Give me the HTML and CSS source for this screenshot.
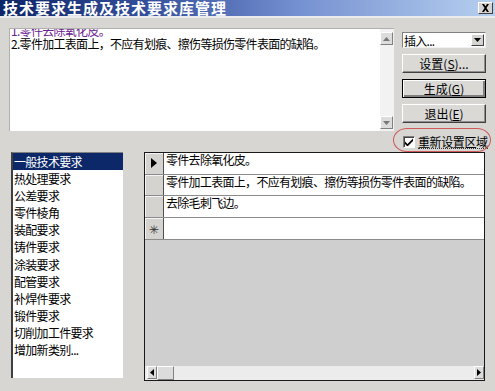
FILE: index.html
```html
<!DOCTYPE html>
<html lang="zh-CN">
<head>
    <meta charset="UTF-8">
    <title>技术要求生成及技术要求库管理</title>
    <link rel="stylesheet" href="styles.css">
</head>
<body>
    <div class="window">
        <div class="titlebar">
            <span class="title">技术要求生成及技术要求库管理</span>
            <span class="close-btn">
                <svg width="9" height="8" viewBox="0 0 9 8"><path d="M1 0h2l1.5 2.2L6 0h2L5.5 4 8 8H6L4.5 5.8 3 8H1l2.5-4z" fill="#000"/></svg>
            </span>
        </div>

        <div class="top">
            <div class="memo">
                <div class="memo-text">
                    <p class="old-line">1.零件去除氧化皮。</p>
                    <p>2.零件加工表面上，不应有划痕、擦伤等损伤零件表面的缺陷。</p>
                </div>
                <div class="vscroll">
                    <span class="sb-btn"><svg width="7" height="4" viewBox="0 0 7 4"><path d="M3.5 0L7 4H0z" fill="#777"/></svg></span>
                    <span class="sb-btn"><svg width="7" height="4" viewBox="0 0 7 4"><path d="M0 0h7L3.5 4z" fill="#777"/></svg></span>
                </div>
            </div>

            <div class="side">
                <div class="combo">
                    <span class="combo-text">插入...</span>
                    <span class="combo-btn"><svg width="7" height="4" viewBox="0 0 7 4"><path d="M0 0h7L3.5 4z" fill="#000"/></svg></span>
                </div>
                <div class="btn">设置(<u>S</u>)...</div>
                <div class="btn default">生成(<u>G</u>)</div>
                <div class="btn">退出(<u>E</u>)</div>
                <div class="check-row">
                    <span class="checkbox">
                        <svg width="8" height="8" viewBox="0 0 8 8"><path d="M0 3.5l2.5 2.5L8 0.5V3L2.5 8.5 0 6z" fill="#000"/></svg>
                    </span>
                    <span class="check-label">重新设置区域</span>
                </div>
            </div>
        </div>

        <div class="bottom">
            <ul class="list">
                <li class="active">一般技术要求</li>
                <li>热处理要求</li>
                <li>公差要求</li>
                <li>零件棱角</li>
                <li>装配要求</li>
                <li>铸件要求</li>
                <li>涂装要求</li>
                <li>配管要求</li>
                <li>补焊件要求</li>
                <li>锻件要求</li>
                <li>切削加工件要求</li>
                <li>增加新类别...</li>
            </ul>

            <div class="grid">
                <div class="row">
                    <div class="row-head"><svg width="6" height="10" viewBox="0 0 6 10"><path d="M0 0l6 5-6 5z" fill="#000"/></svg></div>
                    <div class="cell">零件去除氧化皮。</div>
                </div>
                <div class="row">
                    <div class="row-head"></div>
                    <div class="cell">零件加工表面上，不应有划痕、擦伤等损伤零件表面的缺陷。</div>
                </div>
                <div class="row">
                    <div class="row-head"></div>
                    <div class="cell">去除毛刺飞边。</div>
                </div>
                <div class="row">
                    <div class="row-head new-row">✳</div>
                    <div class="cell"></div>
                </div>
                <div class="grid-empty"></div>
                <div class="hscroll">
                    <span class="sb-btn small"><svg width="4" height="7" viewBox="0 0 4 7"><path d="M4 0v7L0 3.5z" fill="#000"/></svg></span>
                    <span class="sb-thumb"></span>
                    <span class="sb-track"></span>
                    <span class="sb-btn small"><svg width="4" height="7" viewBox="0 0 4 7"><path d="M0 0l4 3.5L0 7z" fill="#000"/></svg></span>
                </div>
            </div>
        </div>
    </div>
</body>
</html>
```

FILE: styles.css
```css
* {
    margin: 0;
    padding: 0;
    box-sizing: border-box;
}

body {
    margin: 0;
    background: #d7d6d3;
}

.window {
    width: 495px;
    height: 391px;
    overflow: hidden;
    background: #d7d6d3;
    font-family: "Noto Sans CJK SC", "Liberation Sans", sans-serif;
    font-size: 12px;
    letter-spacing: -0.7px;
    color: #000;
}

/* title bar */
.titlebar {
    height: 18px;
    display: flex;
    align-items: center;
    justify-content: space-between;
    padding: 0 2px 0 3px;
    background: linear-gradient(90deg, #0e2566 0%, #34509c 30%, #7590d0 60%, #b6d0f0 100%);
    border-bottom: 2px solid #ececec;
}

.title {
    color: #fff;
    font-weight: bold;
    font-size: 15px;
    letter-spacing: 1px;
    line-height: 16px;
}

.close-btn {
    width: 15px;
    height: 12px;
    display: flex;
    align-items: center;
    justify-content: center;
    background: #d6d4d0;
    border: 1px solid;
    border-color: #fff #404040 #404040 #fff;
}

/* top area */
.top {
    height: 134px;
    display: flex;
    align-items: flex-start;
    gap: 8px;
    padding: 10px 0 0 9px;
}

.memo {
    width: 385px;
    height: 103px;
    display: flex;
    background: #fff;
    border-top: 1px solid #b0b0b0;
    border-left: 1px solid #b0b0b0;
}

.memo-text {
    flex: 1;
    overflow: hidden;
    line-height: 13px;
    padding-left: 1px;
}

.old-line {
    margin-top: -5px;
    color: #6a2090;
}

.vscroll {
    width: 14px;
    display: flex;
    flex-direction: column;
    justify-content: space-between;
    padding: 3px 0 2px;
    background: #f2f2f2;
}

.sb-btn {
    width: 13px;
    height: 13px;
    display: flex;
    align-items: center;
    justify-content: center;
    background: #dcdcdc;
    border: 1px solid;
    border-color: #fff #808080 #808080 #fff;
}

.side {
    width: 84px;
    display: flex;
    flex-direction: column;
}

.combo {
    margin-top: 4px;
    height: 16px;
    display: flex;
    align-items: center;
    justify-content: space-between;
    background: #fff;
    border: 1px solid;
    border-color: #808080 #f0f0f0 #f0f0f0 #808080;
    padding-left: 1px;
}

.combo-text {
    line-height: 13px;
}

.combo-btn {
    width: 13px;
    height: 12px;
    margin-right: 1px;
    display: flex;
    align-items: center;
    justify-content: center;
    background: #d6d4d0;
    border: 1px solid;
    border-color: #fff #404040 #404040 #fff;
}

.btn {
    margin-top: 6px;
    height: 19px;
    display: flex;
    align-items: center;
    justify-content: center;
    background: #dad9d6;
    border: 1px solid;
    border-color: #fff #404040 #404040 #fff;
    box-shadow: inset -1px -1px #909090;
    letter-spacing: 0;
}

.btn.default {
    border: 1px solid #000;
    box-shadow: inset 1px 1px #fff, inset -2px -2px #808080;
}

.check-row {
    position: relative;
    margin-top: 10px;
    height: 17px;
    display: flex;
    align-items: center;
    gap: 3px;
    padding-left: 1px;
    white-space: nowrap;
}

/* red marking round the checkbox */
.check-row::before {
    content: '';
    position: absolute;
    left: -9px;
    right: -5px;
    top: -5px;
    bottom: -2px;
    border: 1px solid #d05858;
    border-radius: 14px / 50%;
}

.checkbox {
    flex-shrink: 0;
    width: 12px;
    height: 12px;
    display: flex;
    align-items: center;
    justify-content: center;
    background: #fff;
    border: 1px solid;
    border-color: #808080 #fff #fff #808080;
    box-shadow: inset 1px 1px #404040;
}

.check-label {
    line-height: 13px;
    letter-spacing: -0.4px;
    border-bottom: 1px dotted #333;
}

/* bottom area */
.bottom {
    display: flex;
    gap: 21px;
    padding-left: 11px;
}

.list {
    width: 112px;
    height: 226px;
    list-style: none;
    background: #fff;
    border-top: 1px solid #808080;
    border-left: 2px solid #404040;
}

.list li {
    height: 17.1px;
    line-height: 17px;
    padding-left: 1px;
    white-space: nowrap;
}

.list li.active {
    background: #0c2868;
    color: #fff;
}

.grid {
    width: 341px;
    height: 229px;
    display: flex;
    flex-direction: column;
    border: 1px solid #1a1a1a;
    background: #cfcfcf;
}

.row {
    height: 21.7px;
    display: flex;
    border-bottom: 1px solid #8c8c8c;
}

.row-head {
    width: 19px;
    display: flex;
    align-items: center;
    justify-content: center;
    background: #d4d3d0;
    border-right: 1px solid #505050;
    box-shadow: inset 1px 1px #f4f4f4;
}

.new-row {
    color: #333;
    letter-spacing: 0;
}

.cell {
    flex: 1;
    background: #fff;
    padding-left: 2px;
    line-height: 14px;
    white-space: nowrap;
}

.grid-empty {
    flex: 1;
}

.hscroll {
    height: 14px;
    display: flex;
    padding-left: 2px;
    background: #ececec;
}

.sb-btn.small {
    width: 10px;
    height: 13px;
}

.sb-thumb {
    width: 17px;
    background: #dcdcdc;
    border: 1px solid;
    border-color: #fff #808080 #808080 #fff;
}

.sb-track {
    flex: 1;
}
```
